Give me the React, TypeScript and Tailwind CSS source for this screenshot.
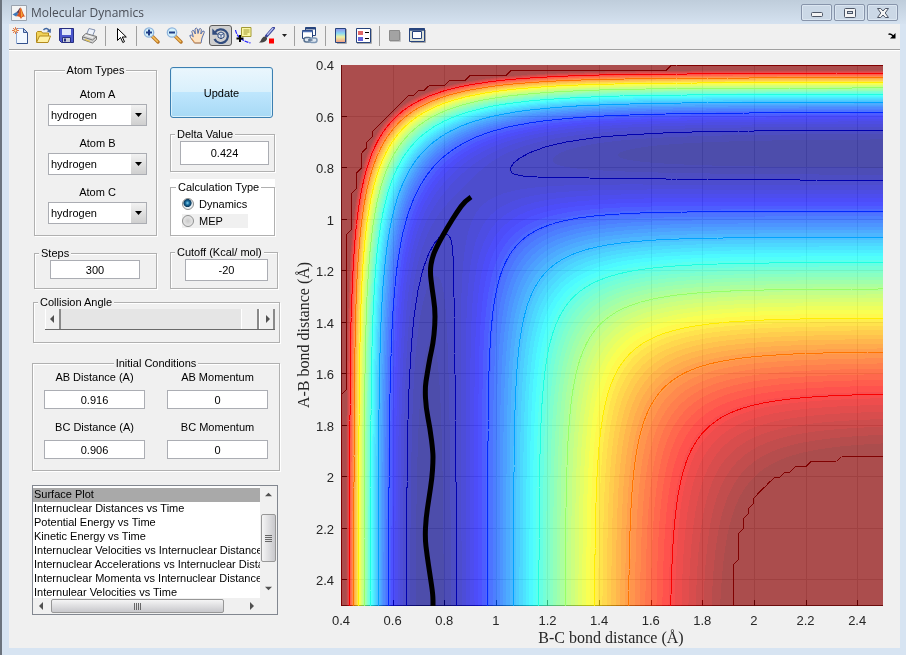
import { ReactNode } from "react";
import clsx from "clsx";

/* ---------- potential energy surface (LEPS, kcal/mol, angstrom) ---------- */

const DEPTH = 103.9;
const BETA = 1.986;
const R_EQ = 0.7405;
const SATO = 0.18;
const CUTOFF = -20;

const R_MIN = 0.4;
const R_MAX = 2.5;
const PLOT_W = 542;
const PLOT_H = 541;
const LEVELS = [-100, -90, -80, -70, -60, -50, -40, -30, -20.001];
const TICKS = [0.4, 0.6, 0.8, 1, 1.2, 1.4, 1.6, 1.8, 2, 2.2, 2.4];

const toX = (r: number) => ((r - R_MIN) / (R_MAX - R_MIN)) * PLOT_W;
const toY = (r: number) => ((r - R_MIN) / (R_MAX - R_MIN)) * PLOT_H;

const scale = DEPTH / (4 * (1 + SATO));
const coulomb = (e: number) => scale * ((3 + SATO) * e * e - (2 + 6 * SATO) * e);
const exchange = (e: number) => scale * ((1 + 3 * SATO) * e * e - (6 + 2 * SATO) * e);
const decay = (r: number) => Math.exp(-BETA * (r - R_EQ));

function energy(rAB: number, rBC: number) {
  const bonds = [decay(rAB), decay(rBC), decay(rAB + rBC)];
  const q = bonds.map(coulomb);
  const [a, b, c] = bonds.map(exchange);
  const j = Math.sqrt(((a - b) ** 2 + (b - c) ** 2 + (c - a) ** 2) / 2);
  return Math.min(q[0] + q[1] + q[2] - j, CUTOFF);
}

const COLORS = 64;

function jet(t: number) {
  const channel = (center: number) =>
    Math.max(0, Math.min(1, 1.5 - Math.abs(4 * t - center)));
  return [channel(3), channel(2), channel(1)];
}

function rgb(t: number, alpha: number) {
  const parts = jet(t).map((v) => Math.round(255 * (v * alpha + 1 - alpha)));
  return `rgb(${parts.join(",")})`;
}

const toUnit = (v: number) => (v + DEPTH) / (CUTOFF + DEPTH);

function buildBands() {
  const paths: string[] = Array(COLORS).fill("");
  for (let y = 0; y < PLOT_H; y++) {
    const rAB = R_MIN + ((y + 0.5) / PLOT_H) * (R_MAX - R_MIN);
    let start = 0;
    let last = -1;
    for (let x = 0; x <= PLOT_W; x++) {
      let band = -2;
      if (x < PLOT_W) {
        const rBC = R_MIN + ((x + 0.5) / PLOT_W) * (R_MAX - R_MIN);
        const t = toUnit(energy(rAB, rBC));
        band = Math.max(0, Math.min(COLORS - 1, Math.floor(t * COLORS)));
      }
      if (band !== last) {
        if (last >= 0) paths[last] += `M${start} ${y}h${x - start}v1H${start}z`;
        start = x;
        last = band;
      }
    }
  }
  return paths;
}

function buildContours() {
  const n = 105;
  const step = (R_MAX - R_MIN) / n;
  const grid: number[][] = [];
  for (let i = 0; i <= n; i++) {
    grid.push([]);
    for (let k = 0; k <= n; k++) {
      grid[i].push(energy(R_MIN + i * step, R_MIN + k * step));
    }
  }
  return LEVELS.map((level) => {
    let d = "";
    for (let i = 0; i < n; i++) {
      for (let k = 0; k < n; k++) {
        const corners = [
          [k, i, grid[i][k]],
          [k + 1, i, grid[i][k + 1]],
          [k + 1, i + 1, grid[i + 1][k + 1]],
          [k, i + 1, grid[i + 1][k]],
        ];
        const hits: string[] = [];
        corners.forEach((p, c) => {
          const q = corners[(c + 1) % 4];
          if (p[2] > level === q[2] > level) return;
          const f = (level - p[2]) / (q[2] - p[2]);
          const x = toX(R_MIN + (p[0] + (q[0] - p[0]) * f) * step);
          const y = toY(R_MIN + (p[1] + (q[1] - p[1]) * f) * step);
          hits.push(`${x.toFixed(1)} ${y.toFixed(1)}`);
        });
        if (hits.length >= 2) d += `M${hits[0]}L${hits[1]}`;
        if (hits.length === 4) d += `M${hits[2]}L${hits[3]}`;
      }
    }
    return d;
  });
}

// path of the collision, in plot pixels
const trajectory = [
  [130, 132], [124, 136], [116, 147], [106, 163], [96, 181], [91, 193], [89, 206],
  [91, 223], [94, 243], [94, 260], [92, 279], [89, 292], [86, 310], [84, 323],
  [85, 343], [89, 363], [92, 387], [92, 397], [91, 413], [88, 433], [85, 453],
  [84, 473], [86, 490], [89, 510], [92, 530], [92, 541],
];

function smooth(points: number[][]) {
  let d = `M${points[0]}`;
  for (let i = 1; i < points.length - 1; i++) {
    const [x, y] = points[i];
    const [nx, ny] = points[i + 1];
    d += `Q${x} ${y} ${(x + nx) / 2} ${(y + ny) / 2}`;
  }
  return `${d}L${points[points.length - 1]}`;
}

const bands = buildBands();
const contours = buildContours();

function SurfacePlot() {
  return (
    <svg viewBox="0 0 610 597" className="block w-full" role="img" aria-label="Surface Plot">
      <g transform="translate(51 14)">
        <g shapeRendering="crispEdges">
          {bands.map((d, i) => (
            <path key={i} d={d} fill={rgb((i + 0.5) / COLORS, 0.7)} />
          ))}
          <g className="mix-blend-difference">
            {TICKS.slice(1).map((t) => (
              <g key={t} stroke="rgb(12,12,12)">
                <path d={`M${Math.round(toX(t)) + 0.5} 0V${PLOT_H}`} />
                <path d={`M0 ${Math.round(toY(t)) - 0.5}H${PLOT_W}`} />
              </g>
            ))}
          </g>
          <g className="mix-blend-difference" stroke="rgb(65,65,65)" fill="none">
            <path d={`M0.5 0V${PLOT_H - 0.5}H${PLOT_W}`} />
            {TICKS.slice(1).map((t) => (
              <path
                key={t}
                d={`M${Math.round(toX(t)) + 0.5} ${PLOT_H - 1}v-5M1 ${Math.round(toY(t)) - 0.5}h5`}
              />
            ))}
          </g>
          {contours.map((d, i) => (
            <path key={i} d={d} fill="none" stroke={rgb(toUnit(LEVELS[i]), 1)} />
          ))}
        </g>
        <path
          d={smooth(trajectory)}
          fill="none"
          stroke="#000"
          strokeWidth="5"
          strokeLinejoin="round"
        />
        <g fontFamily="Liberation Sans, Arial, sans-serif" fontSize="13" fill="#262626">
          {TICKS.map((t) => (
            <g key={t}>
              <text x={toX(t)} y="560" textAnchor="middle">
                {t}
              </text>
              <text x="-7" y={toY(t) + 5} textAnchor="end">
                {t}
              </text>
            </g>
          ))}
        </g>
        <g
          fontFamily="Liberation Serif, Times New Roman, serif"
          fontSize="16"
          fill="#262626"
          textAnchor="middle"
        >
          <text x="270" y="578">
            B-C bond distance (Å)
          </text>
          <text transform="translate(-32 270) rotate(-90)">A-B bond distance (Å)</text>
        </g>
      </g>
    </svg>
  );
}

/* ------------------------------- toolbar -------------------------------- */

function Icon({ children }: { children: ReactNode }) {
  return (
    <svg width="17" height="17" viewBox="0 0 17 17" className="shrink-0" aria-hidden="true">
      {children}
    </svg>
  );
}

function Lens({ plus }: { plus?: boolean }) {
  return (
    <Icon>
      <path d="M9.5 9.5 15 15" stroke="#b87424" strokeWidth="3.4" strokeLinecap="round" />
      <path d="M9.5 9.5 14.5 14.5" stroke="#f7c25c" strokeWidth="1.6" strokeLinecap="round" />
      <circle cx="6" cy="5.5" r="4.7" fill="#d3f1fb" stroke="#8fb4dc" strokeWidth="1.3" />
      <path d="M3 5.500h6" stroke="#1f3c86" strokeWidth="2" />
      {plus && <path d="M6 2.500v6" stroke="#1f3c86" strokeWidth="2" />}
    </Icon>
  );
}

const icons = {
  newFile: (
    <Icon>
      <path d="M4.500 1.500h7l4 4v11h-11z" fill="#f2f8ff" stroke="#8ba6d0" />
      <path d="M11.500 1.500v4h4z" fill="#b9cdee" stroke="#3c5a94" />
      <path d="M5 16.500h10.500V6" fill="none" stroke="#33518c" />
      <path d="M3.500 0v7M0 3.500h7M1 1l5 5M6 1 1 6" stroke="#e0703c" strokeWidth="0.9" />
      <circle cx="3.500" cy="3.500" r="1.500" fill="#ffe9a8" stroke="#d8622c" strokeWidth="0.8" />
    </Icon>
  ),
  open: (
    <Icon>
      <path d="M1.500 15V5.500l1-1h4l1 1.500h6V9" fill="#f1d257" stroke="#b38a1d" />
      <path d="M1.500 15.500 4.500 9h11l-2.500 6.500z" fill="#fff0a0" stroke="#b38a1d" />
      <path d="M8.500 3c1.500-2 4.500-2 5.500.5" fill="none" stroke="#3f649f" strokeWidth="1.4" />
      <path d="m16 1.500-.3 4.500-4-1.800z" fill="#3f649f" />
    </Icon>
  ),
  save: (
    <Icon>
      <path d="M1.500 1.500h14v14h-12l-2-2z" fill="#4a56cc" stroke="#272e80" />
      <path d="M4 2h9v6H4z" fill="#dfe6fa" />
      <path d="M4.500 10.500h8v5h-8z" fill="#c8ccd8" stroke="#272e80" />
      <path d="M6 11.500h2v3H6z" fill="#272e80" />
    </Icon>
  ),
  print: (
    <Icon>
      <path d="M5.500 7.500 8 1.500l6 1.500-2.500 6" fill="#edf2fb" stroke="#8391ae" />
      <path d="M1.500 9.500 5 6.500l10.500 3v3l-4 3.500-10-3.500z" fill="#d4d4d4" stroke="#757575" />
      <path d="m2 10 9.500 3 4-3.500" fill="none" stroke="#757575" />
      <path d="m4 8 8 2.500" stroke="#f4f4f4" />
      <path d="m4 12.500 5 1.800" stroke="#e5c34e" strokeWidth="1.3" />
    </Icon>
  ),
  pointer: (
    <Icon>
      <path d="M5.500 1.500v12l3-3 2.300 5 1.700-.8-2.200-4.700h4z" fill="#fff" stroke="#000" />
    </Icon>
  ),
  pan: (
    <Icon>
      <path
        d="M5.500 16 1.500 10.500.8 8.500l1.500-.5 2 1.800L2.800 4.500l1-1.200 1.200.7L6.300 7 6 2l1.200-1 1.200.9.6 4.600L10.200 2l1.300-.5.9 1.200-.6 4.300 1.900-2.800 1.300-.1.3 1.200L13 11l-1 5z"
        fill="#fde3c3"
        stroke="#4763a5"
        strokeWidth="0.9"
      />
      <path d="M5.500 16h6.500M2.500 11.500l3 4" stroke="#e49a4b" strokeWidth="1.2" />
    </Icon>
  ),
  rotate: (
    <Icon>
      <path d="M3 5.500A7 6.800 0 1 1 2.500 12" fill="none" stroke="#314c7e" strokeWidth="2.2" />
      <path d="M.3 1.500v6.200h6z" fill="#314c7e" />
      <path d="m9 5 3 1.500v3.600L9 11.800l-3-1.700V6.500z" fill="#e6ecf5" stroke="#314c7e" />
      <path d="m6 6.500 3 1.600 3-1.600M9 8.100v3.700" fill="none" stroke="#314c7e" strokeWidth="0.9" />
    </Icon>
  ),
  dataTip: (
    <Icon>
      <path d="M.5 3c1 5 4 10 15 13" fill="none" stroke="#1a1aff" strokeWidth="1.2" strokeDasharray="4 1" />
      <path d="M6.500.5h9.500v9H6.500z" fill="#fbf7a3" stroke="#a39a35" />
      <path d="M8.500 3h6M8.500 5h6M8.500 7h4" stroke="#a39a35" />
      <path d="M5 8v7M1.500 11.500h7" stroke="#000" strokeWidth="2" />
    </Icon>
  ),
  brush: (
    <Icon>
      <path d="m15.500 1-7 8" stroke="#3a449c" strokeWidth="3" strokeLinecap="round" />
      <path d="m15.200 1-6 7" stroke="#b9c2ee" strokeWidth="1.2" />
      <path d="M.8 15.500c2-.5 2-3 3.500-4.500 1.500-1.600 3.200-1.800 4.200-.8s.7 2.500-.8 3.800c-2 1.600-4.500 1.800-6.900 1.500z" fill="#454545" />
      <path d="M11 11.500h5v5h-5z" fill="#f00" />
    </Icon>
  ),
  link: (
    <Icon>
      <path d="M4.500.5h10v8h-10z" fill="#fff" stroke="#27447d" />
      <path d="M4.500 1.500h10" stroke="#27447d" strokeWidth="2" />
      <path d="M1.500 3.500h10v8h-10z" fill="#fff" stroke="#27447d" />
      <path d="M1.500 4.500h10" stroke="#5273b5" strokeWidth="1.5" />
      <rect x="3" y="10.500" width="7" height="4.500" rx="2.200" fill="#dfe8f2" stroke="#57708f" strokeWidth="1.5" />
      <rect x="8.500" y="11" width="7.500" height="4.500" rx="2.200" fill="#dfe8f2" stroke="#7e97b5" strokeWidth="1.5" />
      <path d="M7 13h4.500" stroke="#57708f" strokeWidth="1.5" />
    </Icon>
  ),
  colorbar: (
    <Icon>
      <defs>
        <linearGradient id="bar" x1="0" y1="0" x2="0" y2="1">
          <stop offset="0" stopColor="#8f8fea" />
          <stop offset="0.35" stopColor="#8ad9f2" />
          <stop offset="0.6" stopColor="#eef3a4" />
          <stop offset="1" stopColor="#f19a86" />
        </linearGradient>
      </defs>
      <path d="M5 16.500h9.500V2" fill="none" stroke="#aaa" />
      <path d="M3.500 1.500h10v14h-10z" fill="url(#bar)" stroke="#27447d" />
    </Icon>
  ),
  legend: (
    <Icon>
      <path d="M2 16.500h14.500V2" fill="none" stroke="#aaa" />
      <path d="M1.500 1.500h14v14h-14z" fill="#fff" stroke="#27447d" />
      <path d="M3 4h5v4H3z" fill="#e06666" />
      <path d="M3 10h5v4H3z" fill="#6464dc" />
      <path d="M10 5.500h4M10 11.500h4" stroke="#000" />
    </Icon>
  ),
  hideTools: (
    <Icon>
      <path d="M4 14.500h10.500V5" fill="none" stroke="#c4c4c4" />
      <path d="M3.500 3.500h10v10h-10z" fill="#a3a3a3" stroke="#8a8a8a" />
    </Icon>
  ),
  showTools: (
    <Icon>
      <path d="M2 15.500h14.500V3" fill="none" stroke="#aaa" />
      <path d="M.5 1.500h15v13H.5z" fill="#dfe3d8" stroke="#27447d" />
      <path d="M.5 2.500h15" stroke="#27447d" strokeWidth="2.500" />
      <path d="M3.500 4.500h9v7h-9z" fill="#fff" stroke="#27447d" />
    </Icon>
  ),
};

function Tool({ label, icon, active }: { label: string; icon: ReactNode; active?: boolean }) {
  return (
    <button
      type="button"
      aria-label={label}
      className={clsx(
        "flex h-[21px] w-[23px] items-center justify-center",
        active && "rounded-[3px] border border-[#5c5c5c] bg-[#cfcfcf]"
      )}
    >
      {icon}
    </button>
  );
}

const Separator = () => (
  <span className="flex w-2 justify-center">
    <span className="h-5 w-px bg-[#a0a0a0]" />
  </span>
);

function Toolbar() {
  return (
    <div className="flex h-[25px] items-center pb-[2px]">
      <Tool label="New Figure" icon={icons.newFile} />
      <Tool label="Open File" icon={icons.open} />
      <Tool label="Save Figure" icon={icons.save} />
      <Tool label="Print Figure" icon={icons.print} />
      <Separator />
      <Tool label="Edit Plot" icon={icons.pointer} />
      <Separator />
      <Tool label="Zoom In" icon={<Lens plus />} />
      <Tool label="Zoom Out" icon={<Lens />} />
      <Tool label="Pan" icon={icons.pan} />
      <Tool label="Rotate 3D" icon={icons.rotate} active />
      <Tool label="Data Cursor" icon={icons.dataTip} />
      <Tool label="Brush" icon={icons.brush} />
      <button type="button" aria-label="Brush options" className="flex w-3 justify-center">
        <svg width="5" height="3" viewBox="0 0 5 3">
          <path d="M0 0h5L2.500 3z" fill="#222" />
        </svg>
      </button>
      <Separator />
      <Tool label="Link Plot" icon={icons.link} />
      <Separator />
      <Tool label="Insert Colorbar" icon={icons.colorbar} />
      <Tool label="Insert Legend" icon={icons.legend} />
      <Separator />
      <Tool label="Hide Plot Tools" icon={icons.hideTools} />
      <Tool label="Show Plot Tools" icon={icons.showTools} />
      <button type="button" aria-label="Dock" className="mr-1 ml-auto">
        <svg width="8" height="6" viewBox="0 0 8 6">
          <path d="M.5 1.500C2 .5 3.500 1 5.500 3.500" fill="none" stroke="#000" strokeWidth="1.5" />
          <path d="M7.500 0v5.500H2z" fill="#000" />
        </svg>
      </button>
    </div>
  );
}

/* ------------------------------- controls ------------------------------- */

function Panel({
  title,
  className,
  legend = "ml-1 bg-[#f0f0f0]",
  children,
}: {
  title: string;
  className: string;
  legend?: string;
  children: ReactNode;
}) {
  return (
    <fieldset
      className={clsx(
        "min-w-0 border border-[#b0b0b0] shadow-[1px_1px_0_#fff,inset_1px_1px_0_#fff]",
        className
      )}
    >
      <legend className={clsx("px-[2px] leading-[14px]", legend)}>{title}</legend>
      {children}
    </fieldset>
  );
}

function Field({ label, value, className }: { label: string; value: string; className: string }) {
  return (
    <input
      type="text"
      aria-label={label}
      defaultValue={value}
      className={clsx("block border border-[#abadb3] bg-white text-center", className)}
    />
  );
}

function AtomSelect({ label }: { label: string }) {
  return (
    <label className="block w-[99px]">
      <span className="block text-center leading-[14px]">{label}</span>
      <span className="relative mt-[3px] block">
        <select className="block h-[22px] w-full appearance-none border border-[#abadb3] bg-white pl-[2px]">
          <option>hydrogen</option>
          <option>fluorine</option>
          <option>chlorine</option>
        </select>
        <span className="pointer-events-none absolute inset-y-px right-px flex w-[15px] items-center justify-center bg-linear-to-b from-[#f2f2f2] to-[#cfcfcf]">
          <svg width="7" height="4" viewBox="0 0 7 4">
            <path d="M0 0h7L3.500 4z" fill="#000" />
          </svg>
        </span>
      </span>
    </label>
  );
}

function Measure({ label, value }: { label: string; value: string }) {
  return (
    <label className="block w-[101px]">
      <span className="block text-center leading-[14px]">{label}</span>
      <input
        type="text"
        defaultValue={value}
        className="mt-[6px] block h-[19px] w-full border border-[#abadb3] bg-white text-center"
      />
    </label>
  );
}

function Radio({ label, checked, className }: { label: string; checked?: boolean; className?: string }) {
  return (
    <label className={clsx("flex w-[66px] items-center gap-[5px]", className)}>
      <input
        type="radio"
        name="calculation"
        defaultChecked={checked}
        className="size-3 appearance-none rounded-full border border-[#8e8f8f] bg-[radial-gradient(#c9c9c9,#f4f4f4)] checked:bg-[radial-gradient(circle_at_45%_40%,#7fd0ee_0,#17699b_25%,#0b3a5c_45%,#e8eef2_55%)]"
      />
      {label}
    </label>
  );
}

const arrows = {
  left: "M5 0v8L1 4z",
  right: "M3 0v8l4-4z",
  up: "M0 6h8L4 2z",
  down: "M0 2h8L4 6z",
};

function Arrow({ to, size = 8 }: { to: keyof typeof arrows; size?: number }) {
  return (
    <svg width={size} height={size} viewBox="0 0 8 8" aria-hidden="true">
      <path d={arrows[to]} fill="#505050" />
    </svg>
  );
}

function AngleSlider() {
  const cap =
    "flex w-4 items-center justify-center border-r-2 border-l border-r-[#8a8a8a] border-l-white bg-[#f0f0f0]";
  return (
    <div className="mr-1 ml-[11px] flex h-[21px] border-b border-[#696969]">
      <button type="button" aria-label="Decrease" className={cap}>
        <Arrow to="left" />
      </button>
      <input
        type="range"
        aria-label="Collision Angle"
        min="0"
        max="180"
        defaultValue="180"
        className="h-5 min-w-0 flex-1 appearance-none bg-[#e5e5e5] [&::-webkit-slider-thumb]:h-5 [&::-webkit-slider-thumb]:w-[18px] [&::-webkit-slider-thumb]:appearance-none [&::-webkit-slider-thumb]:border-r-2 [&::-webkit-slider-thumb]:border-l [&::-webkit-slider-thumb]:border-r-[#8a8a8a] [&::-webkit-slider-thumb]:border-l-white [&::-webkit-slider-thumb]:bg-[#f0f0f0]"
      />
      <button type="button" aria-label="Increase" className={cap}>
        <Arrow to="right" />
      </button>
    </div>
  );
}

const plots = [
  "Surface Plot",
  "Internuclear Distances vs Time",
  "Potential Energy vs Time",
  "Kinetic Energy vs Time",
  "Internuclear Velocities vs Internuclear Distance",
  "Internuclear Accelerations vs Internuclear Distance",
  "Internuclear Momenta vs Internuclear Distance",
  "Internulear Velocities vs Time",
];

function PlotList() {
  return (
    <div className="mt-[14px] grid w-[246px] grid-cols-[1fr_17px] grid-rows-[112px_16px] border border-[#828790] bg-white">
      <select
        size={8}
        aria-label="Plot"
        defaultValue="Surface Plot"
        className="h-[112px] w-full appearance-none overflow-hidden bg-white pt-[2px] outline-none"
      >
        {plots.map((name) => (
          <option
            key={name}
            className="h-[14px] min-h-0 overflow-hidden p-0 pl-px leading-[14px] whitespace-nowrap text-black checked:bg-[linear-gradient(#a9a9a9,#a9a9a9)] checked:text-black"
          >
            {name}
          </option>
        ))}
      </select>
      <div className="flex flex-col items-center bg-[#f0f0f0]">
        <button type="button" aria-label="Scroll up" className="flex h-7 items-start pt-[5px]">
          <Arrow to="up" size={7} />
        </button>
        <div className="flex h-12 w-[15px] flex-col items-center justify-center gap-px rounded-[2px] border border-[#979797] bg-linear-to-r from-[#f5f5f5] to-[#c8c8cc]">
          <span className="h-px w-[7px] bg-[#666]" />
          <span className="h-px w-[7px] bg-[#666]" />
          <span className="h-px w-[7px] bg-[#666]" />
          <span className="h-px w-[7px] bg-[#666]" />
        </div>
        <button type="button" aria-label="Scroll down" className="mt-auto flex h-5 items-center">
          <Arrow to="down" size={7} />
        </button>
      </div>
      <div className="flex items-center bg-[#f0f0f0]">
        <button type="button" aria-label="Scroll left" className="flex w-[18px] justify-center">
          <Arrow to="left" />
        </button>
        <div className="flex h-[14px] w-[173px] items-center justify-center gap-px rounded-[2px] border border-[#979797] bg-linear-to-b from-[#f5f5f5] to-[#c8c8cc]">
          <span className="h-[7px] w-px bg-[#666]" />
          <span className="h-[7px] w-px bg-[#666]" />
          <span className="h-[7px] w-px bg-[#666]" />
          <span className="h-[7px] w-px bg-[#666]" />
        </div>
        <button type="button" aria-label="Scroll right" className="ml-auto flex w-[18px] justify-center">
          <Arrow to="right" />
        </button>
      </div>
      <div className="bg-[#f0f0f0]" />
    </div>
  );
}

/* -------------------------------- window -------------------------------- */

function CaptionButton({ label, children }: { label: string; children: ReactNode }) {
  return (
    <button
      type="button"
      aria-label={label}
      className="flex h-[17px] w-[31px] items-center justify-center rounded-[2px] border border-[#8794aa] bg-[#cbd8e6] shadow-[inset_0_0_0_1px_#dbe6f1]"
    >
      <svg width="12" height="10" viewBox="0 0 12 10" stroke="#4d5666" fill="#f4f4f4">
        {children}
      </svg>
    </button>
  );
}

function TitleBar() {
  return (
    <header className="flex h-6 items-center bg-linear-to-b from-[#bfcddb] to-[#d5e2f0] pt-px pr-[8px] pl-[9px]">
      <svg width="16" height="16" viewBox="0 0 16 16" aria-hidden="true">
        <path d="M.5.5h15v15H.5z" fill="#f4f4f4" stroke="#9aa3ae" />
        <path d="m1.500 9.500 4-2.500 2 2-2.500 2.500z" fill="#3e78b8" />
        <path d="M5.500 7c2-1 2.500-4 4-4.500L7.500 9z" fill="#5a3b52" />
        <path d="M9.500 2.500c1.500 1 2.500 7 5 9.500-2-1-3-.5-4.500 2C9 11.500 7 11 5 11.500 8 9 8.500 5 9.500 2.500z" fill="#d9541e" />
        <path d="M9.500 3c.5 3 .5 6 .5 10 1-2 1.500-2.500 2-2.500C11 8 10.500 4 9.500 3z" fill="#f2a33a" />
      </svg>
      <h1 className="ml-1 font-['Open_Sans','Noto_Sans',sans-serif] text-[12px] leading-[16px] text-[#4a4f58]">
        Molecular Dynamics
      </h1>
      <div className="ml-auto flex gap-[2px]">
        <CaptionButton label="Minimize">
          <rect x="0.5" y="4.5" width="11" height="4" rx="1" />
        </CaptionButton>
        <CaptionButton label="Maximize">
          <rect x="0.5" y="0.5" width="11" height="9" rx="1" />
          <rect x="3.5" y="3.5" width="5" height="2" fill="#cbd8e6" />
        </CaptionButton>
        <CaptionButton label="Close">
          <path d="M.5.5h3.200L6 3 8.300.5h3.200L8.200 5l3.300 4.500H8.300L6 7 3.700 9.500H.5L3.800 5z" />
        </CaptionButton>
      </div>
    </header>
  );
}

export default function App() {
  return (
    <div className="flex min-h-screen flex-col border-r border-l-2 border-r-white border-l-[#6b737d] bg-[#d7e4f2] font-['Liberation_Sans',Arial,sans-serif] text-[11px] text-black">
      <TitleBar />
      <div className="mr-[6px] mb-[7px] ml-[7px] flex-1 bg-[#f0f0f0]">
        <Toolbar />
        <div className="border-t border-b border-t-[#a0a0a0] border-b-white" />
        <main className="flex items-start">
          <section className="w-[281px] shrink-0 pt-3 pl-[23px]">
            <div className="flex items-start gap-[13px] pl-[2px]">
              <div className="flex w-[123px] flex-col gap-[10px]">
                <Panel title="Atom Types" className="h-[173px]" legend="mx-auto bg-[#f0f0f0]">
                  <div className="flex flex-col gap-[10px] pt-[10px] pl-[13px]">
                    <AtomSelect label="Atom A" />
                    <AtomSelect label="Atom B" />
                    <AtomSelect label="Atom C" />
                  </div>
                </Panel>
                <Panel title="Steps" className="h-[43px]">
                  <Field label="Steps" value="300" className="ml-[15px] h-[19px] w-[90px]" />
                </Panel>
              </div>
              <div className="flex flex-col pt-1">
                <button
                  type="button"
                  className="h-[51px] w-[103px] rounded-[3px] border border-[#3c7fb1] bg-[linear-gradient(#eaf6fd_0%,#d9f0fc_48%,#bee6fd_50%,#a7d9f5_100%)] pt-[2px] shadow-[inset_0_0_0_1px_#d8f0fb]"
                >
                  Update
                </button>
                <Panel title="Delta Value" className="mt-[9px] h-[45px] w-[105px]">
                  <Field label="Delta Value" value="0.424" className="ml-[9px] h-6 w-[89px]" />
                </Panel>
                <div className="mt-[7px] w-[105px] bg-white pt-px">
                  <Panel title="Calculation Type" className="h-[56px]" legend="ml-[5px] bg-white">
                    <div className="pt-[2px] pl-[11px]">
                      <Radio label="Dynamics" checked className="h-[16px]" />
                      <Radio label="MEP" className="mt-[2px] h-[14px] bg-[#f0f0f0]" />
                    </div>
                  </Panel>
                </div>
                <Panel title="Cutoff (Kcal/ mol)" className="mt-[9px] h-[44px] w-[108px]">
                  <Field label="Cutoff (Kcal/ mol)" value="-20" className="ml-[14px] h-[22px] w-[83px]" />
                </Panel>
              </div>
            </div>
            <Panel title="Collision Angle" className="mt-[6px] ml-px h-[48px] w-[247px]">
              <AngleSlider />
            </Panel>
            <Panel
              title="Initial Conditions"
              className="mt-[13px] h-[115px] w-[248px]"
              legend="mx-auto bg-[#f0f0f0]"
            >
              <div className="flex flex-wrap gap-x-[22px] gap-y-[11px] pl-[11px]">
                <Measure label="AB Distance (A)" value="0.916" />
                <Measure label="AB Momentum" value="0" />
                <Measure label="BC Distance (A)" value="0.906" />
                <Measure label="BC Momentum" value="0" />
              </div>
            </Panel>
            <PlotList />
          </section>
          <section className="min-w-0 flex-1">
            <SurfacePlot />
          </section>
        </main>
      </div>
    </div>
  );
}
